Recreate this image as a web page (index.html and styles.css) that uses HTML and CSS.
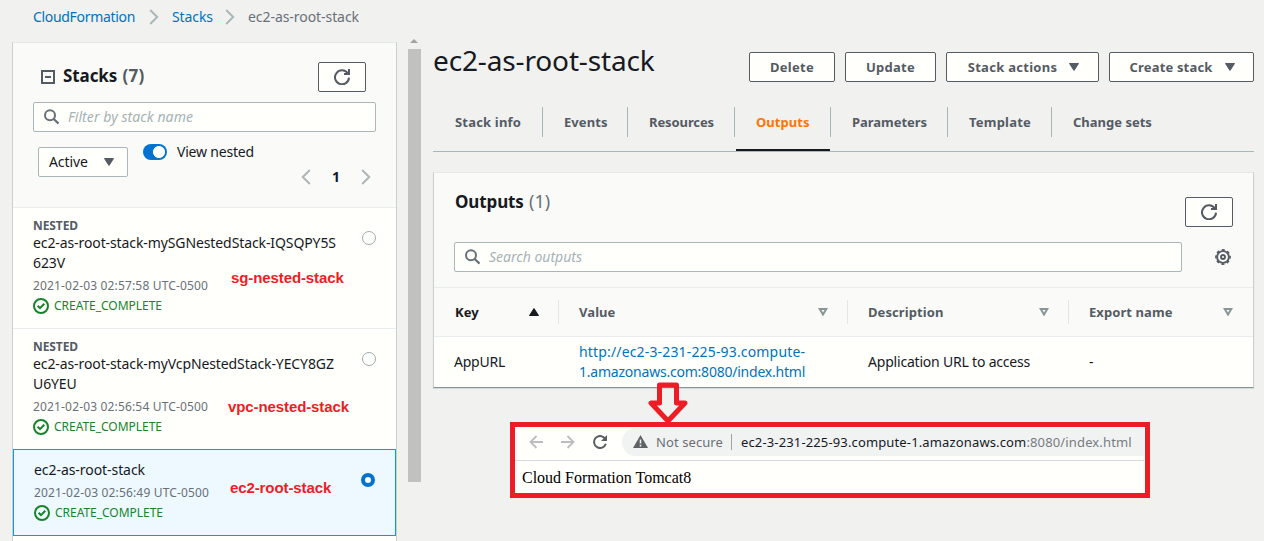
FILE: index.html
```html
<!DOCTYPE html>
<html lang="en">
<head>
<meta charset="utf-8">
<title>CloudFormation - Stack ec2-as-root-stack</title>
<link rel="stylesheet" href="styles.css">
</head>
<body>
<svg class="defs" width="0" height="0">
  <symbol id="refresh" viewBox="0 0 16 16"><path d="M13.8 4.4A7 7 0 1 0 15 8.6" fill="none" stroke="currentColor" stroke-width="2"/><path d="M15 0v5H10" fill="none" stroke="currentColor" stroke-width="2"/></symbol>
  <symbol id="search" viewBox="0 0 16 16"><circle cx="6" cy="6.2" r="5" fill="none" stroke="currentColor" stroke-width="2"/><path d="M9.5 9.8l5 4.8" stroke="currentColor" stroke-width="2.2"/></symbol>
  <symbol id="check" viewBox="0 0 16 16"><circle cx="8" cy="8" r="7" fill="none" stroke="currentColor" stroke-width="2"/><path d="M4.6 7.8L7 10.2l4.3-4.4" fill="none" stroke="currentColor" stroke-width="2"/></symbol>
  <symbol id="chevron" viewBox="0 0 10 16"><path d="M1.2 1l7 7-7 7" fill="none" stroke="currentColor" stroke-width="2"/></symbol>
  <symbol id="caret" viewBox="0 0 10 8"><path d="M.5.5h9L5 7.5z" fill="currentColor" stroke="currentColor" stroke-linejoin="round"/></symbol>
  <symbol id="sort" viewBox="0 0 10 8"><path d="M1.7 1h6.6L5 6.5z" fill="none" stroke="currentColor" stroke-width="2"/></symbol>
</svg>
<div class="page">
  <nav class="crumbs">
    <a class="crumb-root">CloudFormation</a>
    <svg class="chev"><use href="#chevron"/></svg>
    <a>Stacks</a>
    <svg class="chev second"><use href="#chevron"/></svg>
    <span>ec2-as-root-stack</span>
  </nav>
  <div class="columns">
    <aside class="stacks">
      <header class="stacks-head">
        <div class="title-row">
          <svg class="collapse" viewBox="0 0 14 14"><rect x="1" y="1" width="12" height="12" fill="none" stroke="currentColor" stroke-width="2"/><path d="M4 7h6" stroke="currentColor" stroke-width="2"/></svg>
          <h2>Stacks <span>(7)</span></h2>
          <button class="btn refresh"><svg><use href="#refresh"/></svg></button>
        </div>
        <div class="field"><svg><use href="#search"/></svg><span class="filter-hint">Filter by stack name</span></div>
        <div class="controls">
          <div class="select">Active<svg class="caret"><use href="#caret"/></svg></div>
          <div class="switch"></div>
          <span class="nested-label">View nested</span>
          <div class="pager"><svg class="chev prev"><use href="#chevron"/></svg><b>1</b><svg class="chev"><use href="#chevron"/></svg></div>
        </div>
      </header>
      <article class="stack">
        <div class="tag">NESTED</div>
        <div class="name">ec2-as-root-stack-mySGNestedStack-IQSQPY5S<br>623V</div>
        <div class="date">2021-02-03 02:57:58 UTC-0500</div>
        <div class="status"><svg><use href="#check"/></svg>CREATE_COMPLETE</div>
        <i class="radio"></i><strong class="note note-sg">sg-nested-stack</strong>
      </article>
      <article class="stack">
        <div class="tag">NESTED</div>
        <div class="name">ec2-as-root-stack-myVcpNestedStack-YECY8GZ<br>U6YEU</div>
        <div class="date">2021-02-03 02:56:54 UTC-0500</div>
        <div class="status"><svg><use href="#check"/></svg>CREATE_COMPLETE</div>
        <i class="radio"></i><strong class="note note-vpc">vpc-nested-stack</strong>
      </article>
      <article class="stack selected">
        <div class="name">ec2-as-root-stack</div>
        <div class="date">2021-02-03 02:56:49 UTC-0500</div>
        <div class="status"><svg><use href="#check"/></svg>CREATE_COMPLETE</div>
        <i class="radio"></i><strong class="note note-root">ec2-root-stack</strong>
      </article>
    </aside>
    <div class="scrollbar"><svg viewBox="0 0 8 4"><path d="M0 4l4-4 4 4z" fill="#a3a3a3"/></svg><div class="thumb"></div></div>
    <main>
      <div class="heading">
        <h1>ec2-as-root-stack</h1>
        <button class="btn delete">Delete</button>
        <button class="btn update">Update</button>
        <button class="btn actions">Stack actions<svg class="caret"><use href="#caret"/></svg></button>
        <button class="btn create">Create stack<svg class="caret"><use href="#caret"/></svg></button>
      </div>
      <div class="tabs">
        <a class="t-info">Stack info</a><a class="t-events">Events</a><a class="t-res">Resources</a><a class="t-out active">Outputs</a><a class="t-par">Parameters</a><a class="t-tpl">Template</a><a class="t-chg">Change sets</a>
      </div>
      <section class="outputs">
        <div class="out-title"><h2>Outputs <span>(1)</span></h2><button class="btn refresh"><svg><use href="#refresh"/></svg></button></div>
        <div class="out-search">
          <div class="field"><svg><use href="#search"/></svg><span>Search outputs</span></div>
          <svg class="gear" viewBox="0 0 16 16" fill="none" stroke="currentColor"><circle cx="8" cy="8" r="5.9" stroke-width="1.9"/><circle cx="8" cy="8" r="7.1" stroke-width="1.6" stroke-dasharray="3.1 2.476" stroke-dashoffset="1.55"/><circle cx="8" cy="8" r="2" stroke-width="1.9"/></svg>
        </div>
        <div class="row head">
          <div class="key">Key<svg class="caret up"><use href="#caret"/></svg></div>
          <div>Value<svg class="caret"><use href="#sort"/></svg></div>
          <div>Description<svg class="caret"><use href="#sort"/></svg></div>
          <div class="exp">Export name<svg class="caret"><use href="#sort"/></svg></div>
        </div>
        <div class="row body">
          <div class="app">AppURL</div>
          <a><span class="url-a">http://ec2-3-231-225-93.compute-</span><br><span class="url-b">1.amazonaws.com:8080/index.html</span></a>
          <div class="desc">Application URL to access</div>
          <div>-</div>
        </div>
      </section>
      <figure class="browser">
        <div class="toolbar">
          <svg class="nav" viewBox="0 0 14 14"><path d="M14 7H1.5M7.5 1L1.5 7l6 6" fill="none" stroke="#bbbdbf" stroke-width="1.8"/></svg>
          <svg class="nav" viewBox="0 0 14 14"><path d="M0 7h12.5M6.5 1l6 6-6 6" fill="none" stroke="#bbbdbf" stroke-width="1.8"/></svg>
          <svg class="nav reload" viewBox="0 0 14 14"><path d="M12 3.6A6 6 0 1 0 12.8 8.7" fill="none" stroke="#5a5e62" stroke-width="2"/><path d="M14 0v6H8z" fill="#5a5e62"/></svg>
          <div class="address">
            <svg class="warn" viewBox="0 0 15 13"><path d="M7.5 0L15 13H0z" fill="#5f6368"/><path d="M7.5 4.5v4M7.5 9.8v1.7" stroke="#f1f3f3" stroke-width="1.5"/></svg>
            <span class="insecure">Not secure</span><span class="url">ec2-3-231-225-93.compute-1.amazonaws.com<span>:8080/index.html</span></span>
          </div>
        </div>
        <p>Cloud Formation Tomcat8</p>
        <svg class="arrow" viewBox="0 0 40 42"><path d="M11.5 3h17v18h8.500L20 39 3 21h8.500z" fill="none" stroke="#ee1c25" stroke-width="5" stroke-linejoin="round"/></svg>
      </figure>
    </main>
  </div>
</div>
</body>
</html>
```
FILE: styles.css
```css
* { box-sizing: border-box; }
body { margin: 0; background: #f1f1f0; color: #16191f; font: 14px/20px "Noto Sans", "Open Sans", sans-serif; }
svg { display: block; flex: none; }
h1, h2, p, figure { margin: 0; }
.defs { position: absolute; }
.page { width: 1264px; height: 541px; overflow: hidden; }

.crumbs { display: flex; align-items: center; height: 34px; padding-left: 33px; color: #687078; }
.crumbs a { color: #0073bb; letter-spacing: -.08px; }
.crumbs .crumb-root { letter-spacing: -.32px; }
.chev { width: 10px; height: 16px; color: #aab7b8; }
.crumbs .chev { margin: 0 13px 0 14px; }
.crumbs .chev.second { margin: 0 13px 0 12px; }
.crumbs span { letter-spacing: -.06px; }

.columns { display: flex; height: 507px; padding-left: 12px; }
.stacks { width: 385px; height: 520px; margin-top: 8px; background: #fffffc; border: 1px solid #c8d0d1; border-top-color: #e5e8e8; }
.stacks-head { height: 165px; padding: 19px 20px 0; background: #fafbf8; border-bottom: 1px solid #eaeded; }
.title-row { display: flex; align-items: center; height: 30px; padding: 0 10px 0 8px; }
.collapse { width: 14px; height: 14px; color: #545b64; }
h2 { font-size: 17px; line-height: 24px; font-weight: 700; }
h2 span { color: #545b64; }
.stacks h2 { margin: 0 0 2px 8px; letter-spacing: -.1px; }
.stacks h2 span { margin-left: 1px; letter-spacing: .25px; }
.btn { display: flex; align-items: center; justify-content: center; height: 30px; margin: 0; padding: 0; background: #fffffc; border: 1px solid #545b64; border-radius: 2px; color: #545b64; font: 700 13px/20px "Noto Sans", sans-serif; letter-spacing: .28px; white-space: nowrap; }
.refresh { width: 48px; margin-left: auto; }
.refresh svg { width: 16px; height: 16px; }
.field { display: flex; align-items: center; height: 30px; padding-left: 10px; border: 1px solid #aab7b8; border-radius: 2px; background: #fffffc; font-style: italic; color: #a5b3b4; }
.field svg { width: 16px; height: 16px; margin-right: 8px; color: #687078; }
.stacks .field { margin-top: 10px; }
.filter-hint { letter-spacing: .07px; }
.controls { display: flex; height: 54px; margin-top: 15px; padding-left: 5px; }
.select { display: flex; align-items: center; width: 90px; height: 30px; padding-left: 10px; border: 1px solid #aab7b8; border-radius: 2px; background: #fffffc; letter-spacing: -.1px; }
.caret { width: 10px; height: 8px; }
.select .caret { margin-left: 16px; color: #545b64; }
.switch { width: 24px; height: 16px; margin: -3px 10px 0 15px; border-radius: 8px; background: radial-gradient(circle at 16px 8px, #fffffc 5.6px, #0073d0 6.4px); }
.nested-label { margin-top: -5px; letter-spacing: -.2px; white-space: nowrap; }
.pager { display: flex; align-items: center; height: 20px; margin: 20px 0 0 auto; padding-right: 5px; }
.pager b { width: 50px; text-align: center; }
.prev { transform: scaleX(-1); }

.stack { position: relative; height: 121px; padding: 9px 20px 0; border-bottom: 1px solid #eaeded; }
.tag { height: 15px; line-height: 18px; font-size: 12px; font-weight: 700; color: #545b64; letter-spacing: -.09px; }
.name { letter-spacing: -.1px; white-space: nowrap; }
.tag + .name { height: 44px; padding-top: 1px; }
.date { line-height: 20px; font-size: 12px; color: #687078; letter-spacing: .16px; }
.status { display: flex; align-items: center; height: 20px; font-size: 12px; color: #16842a; letter-spacing: -.03px; }
.status svg { width: 16px; height: 16px; margin-right: 5px; }
.radio { position: absolute; left: 349px; top: 23px; width: 14px; height: 14px; border: 1px solid #9eacad; border-radius: 50%; background: #fffffc; }
.note { position: absolute; font: 700 15px/18px "Liberation Sans", Arial, sans-serif; color: #ee1c25; letter-spacing: -.1px; white-space: nowrap; }
.note-sg { left: 218px; top: 61px; }
.note-vpc { left: 215px; top: 69px; }
.note-root { left: 216px; top: 29px; }
.selected { height: 87px; margin-top: -1px; padding-top: 10px; border: 1px solid #1299d6; background: #eef9ff; }
.selected .name { height: 23px; letter-spacing: -.06px; }
.selected .radio { left: 347px; top: 23px; border: 4px solid #0073d0; }

.scrollbar { width: 24px; padding: 5px 0 0 11px; }
.scrollbar svg { width: 8px; height: 4px; margin: 0 0 6px 2px; }
.thumb { width: 13px; height: 433px; background: #c1c1c0; }

main { width: 821px; margin-left: 12px; }
.heading { display: flex; gap: 10px; height: 73px; padding-top: 18px; }
h1 { flex: 1; margin: -10px 0 0 0; font-size: 28px; line-height: 36px; font-weight: 400; letter-spacing: -.14px; }
.btn.delete { width: 86px; }
.btn.update { width: 91px; }
.btn.actions { width: 153px; padding-left: 2px; }
.btn.create { width: 145px; padding-left: 1px; letter-spacing: .17px; }
.btn .caret { margin-left: 12px; }
.tabs { display: flex; height: 45px; border-bottom: 1px solid #aab7b8; }
.tabs a { position: relative; height: 30px; line-height: 30px; padding-left: 21px; border-right: 1px solid #a5b5b8; font-size: 13px; font-weight: 700; color: #545b64; white-space: nowrap; }
.tabs .t-info { width: 110px; padding-left: 22px; letter-spacing: .18px; }
.t-events { width: 85px; letter-spacing: .07px; }
.t-res { width: 107px; letter-spacing: -.1px; }
.t-out { width: 96px; letter-spacing: .04px; }
.t-par { width: 117px; letter-spacing: -.04px; }
.t-tpl { width: 104px; letter-spacing: .21px; }
.tabs .t-chg { border: 0; }
.tabs .active { color: #ff7405; }
.active::after { content: ""; position: absolute; left: 1px; top: 42px; width: 94px; height: 2px; background: #16191f; }

.outputs { height: 216px; margin-top: 20px; background: #fafbf8; border: 1px solid #c8d0d1; border-top-color: #e5e8e8; border-bottom: 1px solid #879596; box-shadow: 0 1px 1px #d5dbdb; }
.out-title { display: flex; height: 54px; padding: 24px 20px 0; }
.out-title h2 { margin: -8px 0 0 1px; letter-spacing: -.12px; }
.out-title h2 span { margin-left: 1px; font-weight: 400; font-size: 18px; color: #687078; letter-spacing: 0; }
.out-search { display: flex; align-items: center; height: 61px; padding: 0 22px 0 20px; justify-content: space-between; border-bottom: 1px solid #eaeded; }
.out-search .field { width: 728px; }
.gear { width: 16px; height: 16px; color: #545b64; }
.row { display: grid; grid-template-columns: 125px 289px 221px 184px; align-items: center; }
.head { height: 49px; border-bottom: 1px solid #eaeded; font-size: 13px; font-weight: 700; color: #545b64; }
.head div { display: flex; align-items: center; justify-content: space-between; height: 24px; padding: 0 19px 0 20px; border-right: 1px solid #e3e7e7; letter-spacing: .08px; }
.head div.exp { border: 0; padding-right: 20px; }
.head .key { padding-left: 21px; color: #16191f; }
.head .caret { color: #879596; }
.head .caret.up { color: #16191f; transform: scaleY(-1); }
.body { height: 50px; background: #fffffc; }
.body > * { padding-left: 20px; }
.body a { color: #0073bb; white-space: nowrap; }
.body .app { letter-spacing: -.24px; }
.url-a { letter-spacing: .16px; }
.url-b { letter-spacing: -.22px; }
.desc { letter-spacing: -.2px; }

.browser { position: relative; width: 640px; height: 76px; margin: 34px 0 0 77px; border: 5px solid #ee1c25; background: #fffffc; }
.toolbar { display: flex; align-items: center; height: 34px; margin-right: 1px; padding-left: 14px; border-bottom: 1px solid #d8dade; }
.nav { width: 14px; height: 14px; margin: -4px 18px 0 0; }
.reload { margin-right: 15px; }
.address { display: flex; align-items: center; flex: 1; height: 28px; margin-top: -4px; padding-left: 11px; border-radius: 14px 0 0 14px; background: #f1f3f3; font-size: 13px; white-space: nowrap; }
.warn { width: 15px; height: 13px; margin-right: 8px; }
.insecure { height: 16px; line-height: 16px; width: 76px; margin-right: 9px; border-right: 1px solid #a0a3a6; color: #6b6f73; letter-spacing: .09px; }
.url { letter-spacing: .14px; }
.url span { color: #777b7f; }
.browser p { padding: 8px 0 0 7px; font: 16px/18px "Liberation Serif", "Times New Roman", serif; color: #000; }
.arrow { position: absolute; left: 133px; top: -45px; width: 40px; height: 42px; }
```
